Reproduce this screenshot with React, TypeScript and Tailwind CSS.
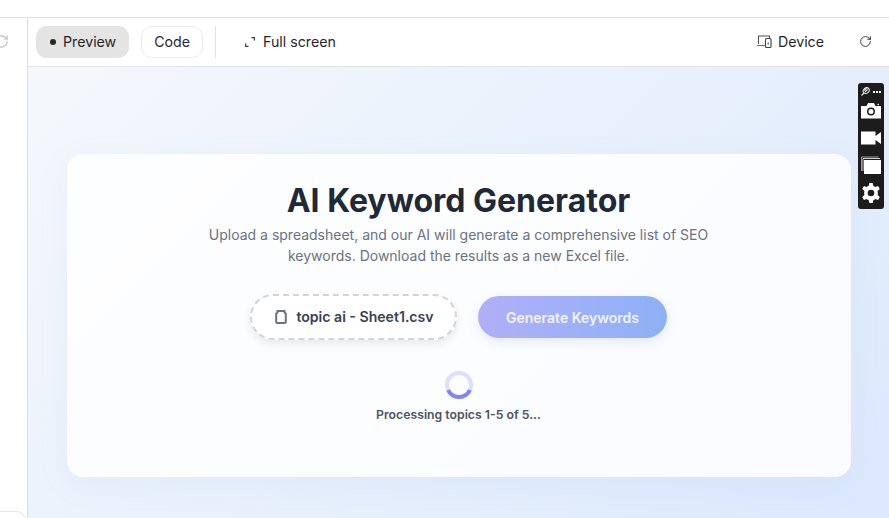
import { RotateCw } from "lucide-react";

function CornersIcon() {
  return (
    <svg width="10" height="10" viewBox="0 0 10 10" fill="none" stroke="#3f3f46" strokeWidth="1.2" className="shrink-0">
      <path d="M0.6 6.5V9.4H3.5" />
      <path d="M6.5 0.6H9.4V3.5" />
    </svg>
  );
}

function DeviceIcon() {
  return (
    <svg width="15" height="13" viewBox="0 0 15 13" fill="none" strokeWidth="1.1" className="shrink-0">
      <path d="M1.5 9V1H12.5V3" stroke="#52525b" />
      <path d="M0 10.5H8" stroke="#8a6a4a" />
      <rect x="8.5" y="3.5" width="5.5" height="9" rx="1" stroke="#3f3f46" />
      <path d="M11.2 7.5V9.5" stroke="#3f3f46" />
    </svg>
  );
}

function Toolbox() {
  return (
    <div className="absolute left-[858px] top-[83px] flex h-[126px] w-[26px] flex-col items-center rounded-[3px] bg-[#1c1c1c] pt-[4px]">
      <div className="flex h-[9px] w-full items-center justify-center gap-[3px]">
        <svg width="9" height="9" viewBox="0 0 9 9" fill="none" stroke="#e8e8e8" strokeWidth="1.1">
          <ellipse cx="5.2" cy="3.6" rx="3.2" ry="2.6" transform="rotate(-40 5.2 3.6)" />
          <path d="M4 5L6.5 2.5M3 3.5L5.5 1.2M3 6L0.5 8.5" />
        </svg>
        <div className="flex gap-[1px]">
          <span className="h-[2px] w-[2px] bg-white" />
          <span className="h-[2px] w-[2px] bg-white" />
          <span className="h-[2px] w-[2px] bg-white" />
        </div>
      </div>
      <svg className="mt-[7px]" width="20" height="16" viewBox="0 0 20 16">
        <path fillRule="evenodd" fill="#fff" d="M0 3H5.5L7 0H13L14.5 3H20V15.5H0ZM10 4.5A4 4 0 1 0 10 12.5A4 4 0 1 0 10 4.5ZM10 6A2.5 2.5 0 1 1 10 11A2.5 2.5 0 1 1 10 6Z" />
        <rect x="16.5" y="0.8" width="1.4" height="1.4" fill="#fff" />
      </svg>
      <svg className="mt-[12px]" width="20" height="14" viewBox="0 0 20 14">
        <path fill="#fff" d="M0 0.5H14.5V5L20 1V13L14.5 9V13.5H0Z" />
      </svg>
      <svg className="mt-[11px]" width="20" height="18" viewBox="0 0 20 18">
        <path fill="none" stroke="#9a9a9a" strokeWidth="1" d="M0.5 15V1H17.5" />
        <path fill="none" stroke="#cfcfcf" strokeWidth="1" d="M2 15V2.5H19" />
        <rect x="3" y="4" width="17" height="14" fill="#fff" />
      </svg>
      <svg className="mt-[9px]" width="20" height="20" viewBox="0 0 24 24">
        <path fill="#fff" fillRule="evenodd" d="M10 0H14L14.7 3.4A9 9 0 0 1 17.2 4.8L20.5 3.7L22.5 7.2L19.9 9.5A9 9 0 0 1 19.9 14.5L22.5 16.8L20.5 20.3L17.2 19.2A9 9 0 0 1 14.7 20.6L14 24H10L9.3 20.6A9 9 0 0 1 6.8 19.2L3.5 20.3L1.5 16.8L4.1 14.5A9 9 0 0 1 4.1 9.5L1.5 7.2L3.5 3.7L6.8 4.8A9 9 0 0 1 9.3 3.4ZM12 8A4 4 0 1 0 12 16A4 4 0 1 0 12 8Z" />
      </svg>
    </div>
  );
}

export default function App() {
  return (
    <div className="relative flex h-[518px] w-[889px] flex-col overflow-hidden bg-white font-['Inter',sans-serif]">
      <div className="h-[18px] shrink-0 border-b border-[#e0e0e0]" />
      <div className="flex min-h-0 flex-1">
        <aside className="relative w-[28px] shrink-0 overflow-hidden border-r border-[#dcdcdc]">
          <RotateCw size={15} strokeWidth={1.7} color="#bdbdbd" className="absolute -left-[6px] top-[16px]" />
          <div className="absolute -left-[10px] top-[493px] h-[40px] w-[36px] rounded-[10px] border border-[#e4e4e4]" />
        </aside>
        <main className="flex min-w-0 flex-1 flex-col">
          <header className="flex h-[49px] shrink-0 items-center border-b border-[#e2e2e2] pl-[8px] pr-[17px] text-[14.2px] leading-[20px] text-[#27272a]">
            <button className="flex h-[32px] items-center gap-[7px] rounded-[11px] bg-[#e4e4e2] pb-px pl-[14px] pr-[13px]">
              <span className="mt-px h-[6px] w-[6px] rounded-full bg-[#27272a]" />
              Preview
            </button>
            <button className="ml-[12px] flex h-[32px] items-center rounded-[11px] border border-[#ececec] pb-px pl-[12px] pr-[12px]">Code</button>
            <div className="ml-[12px] h-[32px] w-px bg-[#e0e0e0]" />
            <div className="ml-[29px] flex items-center gap-[8px] pb-px">
              <CornersIcon />
              Full screen
            </div>
            <div className="ml-auto flex items-center gap-[6px] pb-px">
              <DeviceIcon />
              Device
            </div>
            <RotateCw size={13} strokeWidth={1.6} color="#27272a" className="ml-[35px] -translate-y-px" />
          </header>
          <section className="flex min-h-0 flex-1 items-start justify-center bg-[linear-gradient(135deg,#f5f8fc_0%,#e6effc_60%,#dbe8fd_100%)] pt-[87px]">
            <div className="flex h-[323px] w-[784px] flex-col items-center rounded-[16px] bg-white/85 pt-[28px] shadow-[0_8px_32px_rgba(120,150,220,0.08)]">
              <h1 className="text-[32px] leading-[38px] font-bold text-[#1f2937]">AI Keyword Generator</h1>
              <p className="mt-[4px] w-[520px] text-center text-[14px] leading-[21px] text-[#6b7280]">
                Upload a spreadsheet, and our AI will generate a comprehensive list of SEO keywords. Download the results as a new Excel file.
              </p>
              <div className="mt-[28px] flex items-center gap-[21px]">
                <div className="flex h-[46px] w-[207px] items-center justify-center gap-[9px] rounded-full border-2 border-dashed border-[#d1d5db] bg-white pl-[2px] shadow-[0_4px_10px_rgba(0,0,0,0.08)]">
                  <svg width="12" height="14" viewBox="0 0 12 14" fill="none" stroke="#6b7280" strokeWidth="2">
                    <path d="M2.5 1H9.5V2.5L10.8 3.5V12A1.2 1.2 0 0 1 9.6 13H2.4A1.2 1.2 0 0 1 1.2 12V3.5L2.5 2.5Z" />
                  </svg>
                  <span className="text-[14.1px] font-semibold text-[#374151]">topic ai - Sheet1.csv</span>
                </div>
                <button className="flex h-[42px] w-[189px] items-center justify-center rounded-full bg-[linear-gradient(90deg,#b1aff6,#8db1f6)] text-[14px] font-semibold text-white/85 shadow-[0_4px_12px_rgba(100,120,200,0.15)]">
                  Generate Keywords
                </button>
              </div>
              <svg className="mt-[31px]" width="28" height="28" viewBox="0 0 28 28" fill="none" strokeWidth="4">
                <circle cx="14" cy="14" r="12" stroke="#dcdffd" />
                <path d="M3.1 19A12 12 0 0 0 24.9 19" stroke="#8184f5" />
              </svg>
              <p className="mt-[8px] text-[12.25px] leading-[16px] font-semibold text-[#4b5563]">Processing topics 1-5 of 5...</p>
            </div>
          </section>
        </main>
      </div>
      <Toolbox />
    </div>
  );
}
